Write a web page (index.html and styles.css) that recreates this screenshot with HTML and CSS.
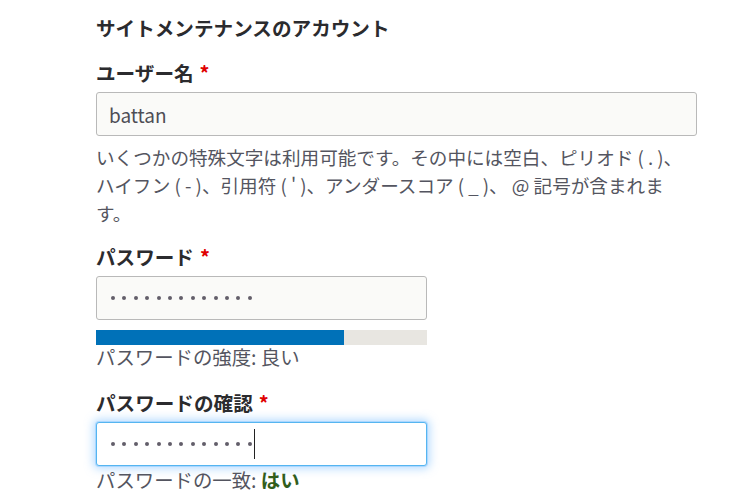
FILE: index.html
```html
<!DOCTYPE html>
<html lang="ja">
<head>
<meta charset="utf-8">
<link rel="stylesheet" href="styles.css">
</head>
<body>
<div class="page">
  <h2 class="section-title">サイトメンテナンスのアカウント</h2>

  <div class="form-item">
    <label class="label">ユーザー名<span class="req">*</span></label>
    <div class="input wide">battan</div>
    <div class="desc">いくつかの特殊文字は利用可能です。その中には空白、ピリオド ( . )、ハイフン ( - )、引用符 ( ' )、アンダースコア ( _ )、 @ 記号が含まれます。</div>
  </div>

  <div class="form-item pw">
    <label class="label">パスワード<span class="req">*</span></label>
    <div class="input narrow">
      <span class="dots"><i></i><i></i><i></i><i></i><i></i><i></i><i></i><i></i><i></i><i></i><i></i><i></i><i></i></span>
    </div>
    <div class="meter"><div class="meter-fill" style="width:75%"></div></div>
    <div class="status">パスワードの強度: 良い</div>
  </div>

  <div class="form-item pw2">
    <label class="label">パスワードの確認<span class="req">*</span></label>
    <div class="input narrow focus">
      <span class="dots"><i></i><i></i><i></i><i></i><i></i><i></i><i></i><i></i><i></i><i></i><i></i><i></i><i></i></span><span class="caret"></span>
    </div>
    <div class="status match">パスワードの一致: <strong class="ok">はい</strong></div>
  </div>
</div>
</body>
</html>
```
FILE: styles.css
```css
html, body {
  margin: 0;
  padding: 0;
  background: #fff;
}
body {
  font-family: "Noto Sans CJK JP", "Noto Sans", sans-serif;
  color: #232429;
}
.page {
  padding: 14px 0 0 96px;
  width: 601px;
}
.section-title {
  margin: 0;
  font-size: 19.6px;
  line-height: 28px;
  font-weight: 700;
  color: #2b2b2e;
}
.form-item {
  margin-top: 17px;
}
.label {
  display: block;
  font-size: 19.6px;
  line-height: 28px;
  font-weight: 700;
  margin-bottom: 5px;
  color: #2b2b2e;
}
.req {
  color: #e00000;
  margin-left: 6px;
}
.input {
  box-sizing: border-box;
  height: 44px;
  border: 1px solid #b9b9b9;
  border-radius: 3px;
  background: #fafaf8;
  display: flex;
  align-items: center;
  padding: 0 12px;
  font-size: 19px;
  color: #4d4d55;
}
.wide { width: 601px; }
.narrow { width: 331px; }
.focus {
  background: #fff;
  border-color: #55b5f0;
  box-shadow: 0 0 0 1px rgba(90,180,255,0.3), 0 0 9px 3px rgba(120,190,255,0.5);
}
.dots {
  display: flex;
  gap: 7.4px;
  padding-left: 2px;
}
.dots i {
  display: block;
  width: 4px;
  height: 4px;
  border-radius: 50%;
  background: #625e6a;
}
.caret {
  display: inline-block;
  width: 1px;
  height: 30px;
  background: #222;
  margin-left: 2px;
}
.desc {
  margin-top: 7px;
  font-size: 18.6px;
  line-height: 28px;
  color: #545560;
}
.pw { margin-top: 16px; }
.meter {
  margin-top: 10px;
  width: 331px;
  height: 15px;
  background: #e8e6e1;
}
.meter-fill {
  height: 100%;
  background: #0071b8;
}
.status {
  font-size: 19.4px;
  line-height: 24px;
  color: #545560;
}
.status.match { margin-top: 2px; }
.pw2 { margin-top: 20px; }
.ok {
  color: #325e1c;
  font-weight: 700;
}
```
